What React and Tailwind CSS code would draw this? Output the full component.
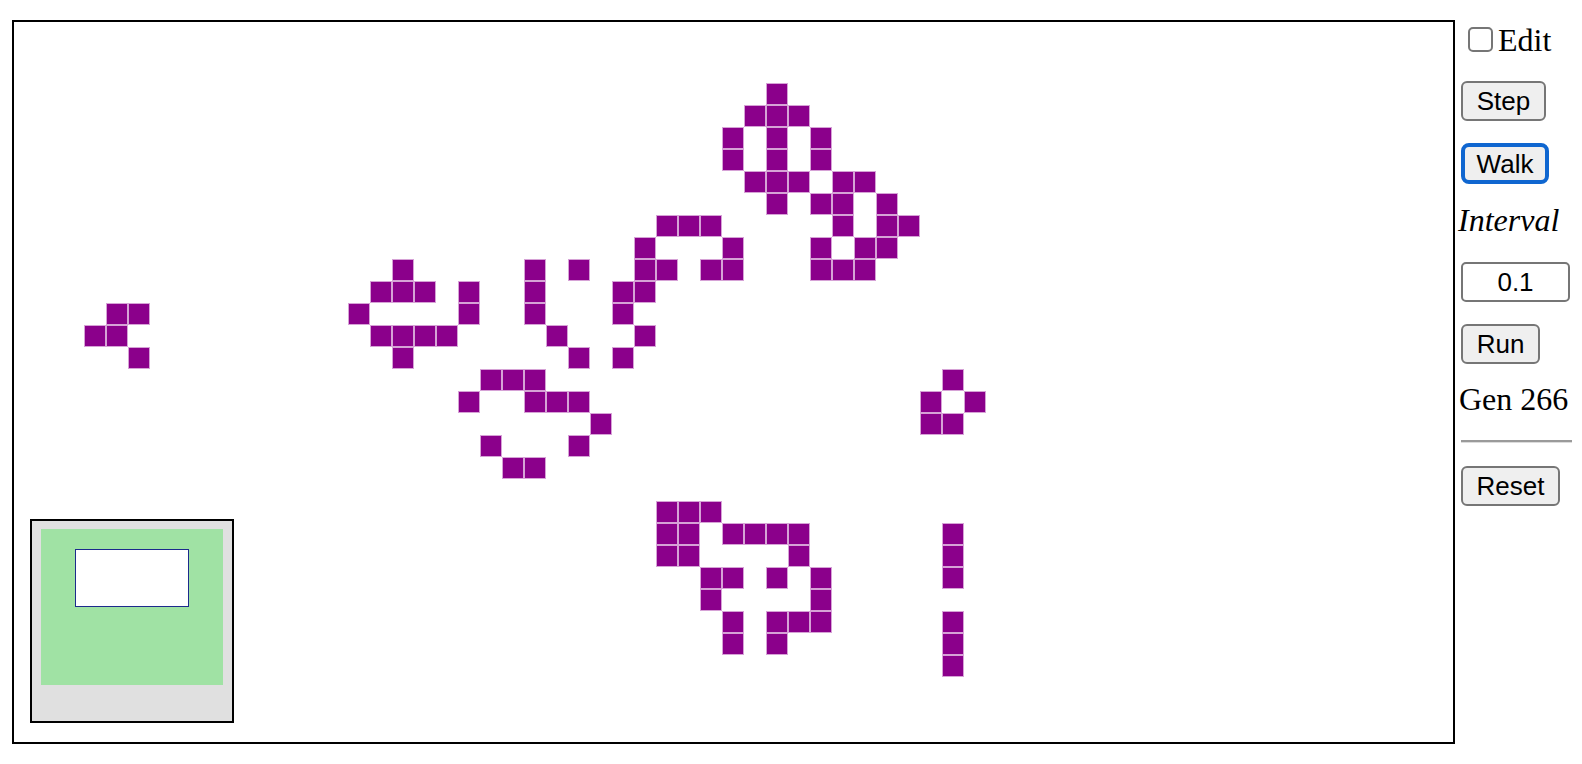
import React from "react";

// live cells as [col, row] on the 22px board grid
const ROWS = {
  3: [34],
  4: [33, 34, 35],
  5: [32, 34, 36],
  6: [32, 34, 36],
  7: [33, 34, 35, 37, 38],
  8: [34, 36, 37, 39],
  9: [29, 30, 31, 37, 39, 40],
  10: [28, 32, 36, 38, 39],
  11: [17, 23, 25, 28, 29, 31, 32, 36, 37, 38],
  12: [16, 17, 18, 20, 23, 27, 28],
  13: [4, 5, 15, 20, 23, 27],
  14: [3, 4, 16, 17, 18, 19, 24, 28],
  15: [5, 17, 25, 27],
  16: [21, 22, 23, 42],
  17: [20, 23, 24, 25, 41, 43],
  18: [26, 41, 42],
  19: [21, 25],
  20: [22, 23],
  22: [29, 30, 31],
  23: [29, 30, 32, 33, 34, 35, 42],
  24: [29, 30, 35, 42],
  25: [31, 32, 34, 36, 42],
  26: [31, 36],
  27: [32, 34, 35, 36, 42],
  28: [32, 34, 42],
  29: [42],
};

const CELLS = Object.entries(ROWS).flatMap(([r, cols]) =>
  cols.map((c) => [c, Number(r)])
);

const serif = { fontFamily: '"Liberation Serif", "Times New Roman", serif' };
const sans = { fontFamily: '"Liberation Sans", Arial, sans-serif' };

const Btn = ({ label, width, focused }) => (
  <button
    style={{ ...sans, width }}
    className={
      focused
        ? "h-[41px] rounded-[8px] border-[4px] border-[#0f66d0] bg-[#efefef] text-[26px] leading-none text-black"
        : "h-[40px] rounded-[6px] border-2 border-[#767676] bg-[#efefef] text-[26px] leading-none text-black"
    }
  >
    {label}
  </button>
);

export default function App() {
  return (
    <div className="flex items-start bg-white min-h-screen">
      {/* board */}
      <div className="relative ml-[12px] mt-[20px] w-[1443px] h-[724px] border-2 border-black overflow-hidden">
        {CELLS.map(([c, r]) => (
          <div
            key={`${c}-${r}`}
            className="absolute w-[22px] h-[22px] bg-[#8b008b] border border-[#d6a2d6]"
            style={{ left: 4 + 22 * c, top: -5 + 22 * r }}
          />
        ))}

        {/* minimap */}
        <div className="absolute left-[16px] bottom-[19px] w-[204px] h-[204px] border-2 border-black bg-[#e0e0e0] pl-[9px] pt-[8px]">
          <div className="w-[182px] h-[156px] bg-[#a0e2a4] pl-[34px] pt-[20px]">
            <div className="w-[114px] h-[58px] bg-white border border-[#1c2a8c]" />
          </div>
        </div>
      </div>

      {/* controls */}
      <div className="ml-[6px] flex flex-col items-start text-black">
        <label
          style={serif}
          className="mt-[22px] h-[36px] flex items-start text-[32px] leading-[36px]"
        >
          <span className="ml-[7px] mt-[5px] w-[25px] h-[25px] rounded-[5px] border-2 border-[#767676] bg-white" />
          <span className="ml-[5px]">Edit</span>
        </label>

        <div className="mt-[23px]">
          <Btn label="Step" width={85} />
        </div>
        <div className="mt-[22px]">
          <Btn label="Walk" width={88} focused />
        </div>

        <div style={serif} className="-ml-[3px] mt-[18px] h-[36px] italic text-[32px] leading-[36px]">
          Interval
        </div>

        <input
          readOnly
          value="0.1"
          style={sans}
          className="mt-[24px] w-[109px] h-[40px] rounded-[5px] border-2 border-[#767676] bg-white text-center text-[26px] text-black outline-none"
        />

        <div className="mt-[22px]">
          <Btn label="Run" width={79} />
        </div>

        <div style={serif} className="-ml-[2px] mt-[17px] h-[36px] text-[32px] leading-[36px]">
          Gen 266
        </div>

        <div className="mt-[23px] w-[111px] h-[3px] border-t-2 border-b border-t-[#9a9a9a] border-b-[#dcdcdc]" />

        <div className="mt-[23px]">
          <Btn label="Reset" width={99} />
        </div>
      </div>
    </div>
  );
}
